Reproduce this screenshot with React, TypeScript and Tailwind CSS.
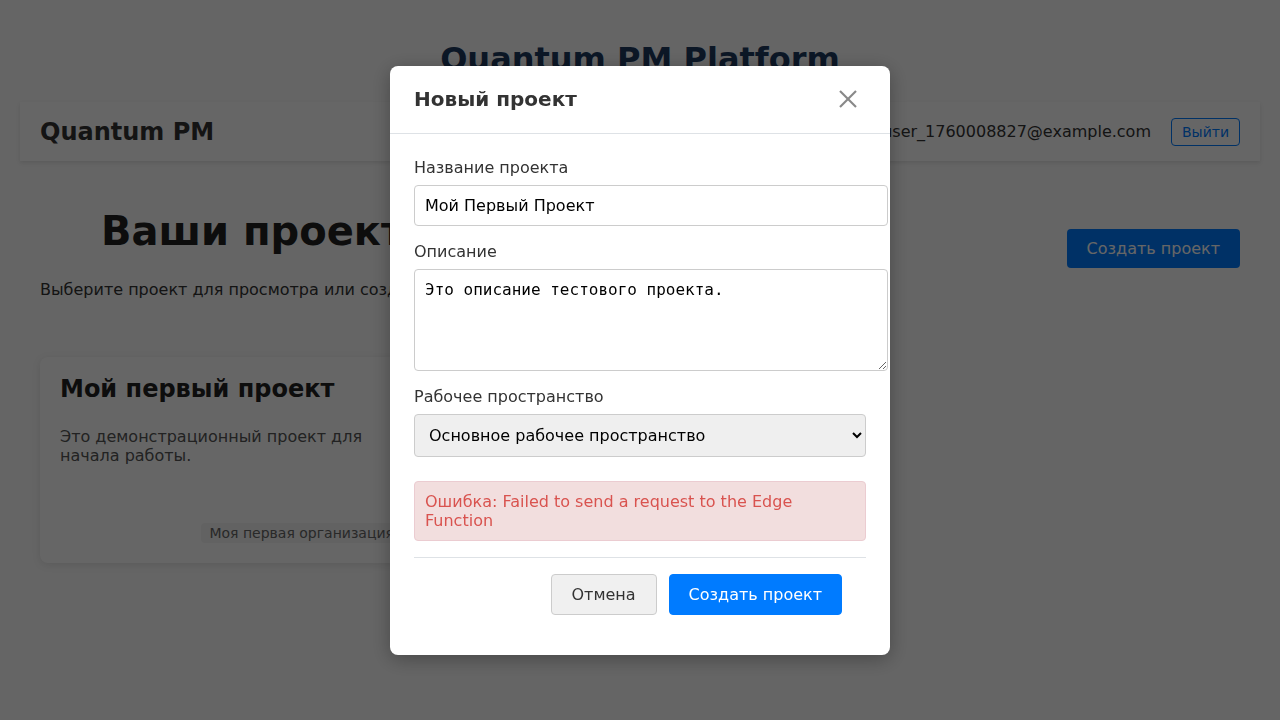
export default function App() {
  return (
    <div className="relative min-h-screen bg-[#fcfcfc] px-5 pt-[41px] font-['DejaVu_Sans',sans-serif] text-[#333]">
      {/* Page title */}
      <h1 className="mb-6 text-center text-[32px] font-bold leading-[37px] text-[#1e3a5f]">
        Quantum PM Platform
      </h1>

      {/* Top bar */}
      <header className="flex h-[59px] items-center justify-between bg-white px-5 shadow-[0_2px_4px_rgba(0,0,0,0.1)]">
        <div className="text-2xl font-bold text-[#333]">Quantum PM</div>
        <div className="flex items-center gap-5">
          <span className="text-base text-[#333]">user_1760008827@example.com</span>
          <button className="rounded border border-[#007bff] px-[10px] py-[3px] text-sm text-[#007bff]">
            Выйти
          </button>
        </div>
      </header>

      {/* Projects */}
      <main className="px-5 pt-[47px]">
        <div className="flex items-start justify-between">
          <div>
            <h2 className="ml-[61px] text-[40px] font-bold leading-[47px] text-[#222]">Ваши проекты</h2>
            <p className="mt-[25px] text-base leading-[19px] text-[#333]">
              Выберите проект для просмотра или создайте новый проект.
            </p>
          </div>
          <button className="mt-[21px] rounded bg-[#007bff] px-5 py-[10px] text-base leading-[19px] text-white">
            Создать проект
          </button>
        </div>

        <div className="mt-[58px] flex gap-5">
          <div className="flex h-[206px] w-[382px] flex-col rounded-lg bg-white p-5 shadow-[0_2px_8px_rgba(0,0,0,0.1)]">
            <h3 className="text-2xl font-bold leading-[24px] text-[#222]">Мой первый проект</h3>
            <p className="mt-[26px] text-base leading-[19px] text-[#555]">
              Это демонстрационный проект для начала работы.
            </p>
            <div className="mt-auto flex justify-end">
              <span className="rounded bg-[#f5f5f5] px-2 py-[1px] text-sm leading-[18px] text-[#666]">
                Моя первая организация
              </span>
            </div>
          </div>
        </div>
      </main>

      {/* Modal */}
      <div className="fixed inset-0 flex items-center justify-center bg-black/60">
        <div className="w-[500px] rounded-lg bg-white shadow-[0_4px_20px_rgba(0,0,0,0.3)]">
          <div className="flex items-center justify-between border-b border-[#dee2e6] px-6 py-5">
            <h2 className="text-xl font-bold leading-[27px] text-[#333]">Новый проект</h2>
            <button className="mr-[9px] text-[#888]">
              <svg width="18" height="18" viewBox="0 0 18 18" fill="none" stroke="currentColor" strokeWidth="2.2">
                <line x1="1" y1="1" x2="17" y2="17" />
                <line x1="17" y1="1" x2="1" y2="17" />
              </svg>
            </button>
          </div>

          <div className="px-6 pb-10 pt-6">
            <div className="mb-4">
              <label className="mb-2 block text-base leading-[19px] text-[#333]">Название проекта</label>
              <input
                type="text"
                defaultValue="Мой Первый Проект"
                className="box-content w-full rounded border border-[#ccc] px-[10px] py-[10px] text-base leading-[19px] text-black outline-none"
              />
            </div>

            <div className="mb-4">
              <label className="mb-2 block text-base leading-[19px] text-[#333]">Описание</label>
              <textarea
                defaultValue="Это описание тестового проекта."
                className="box-content block h-[80px] w-full rounded border border-[#ccc] px-[10px] py-[10px] font-['DejaVu_Sans_Mono',monospace] text-base leading-[19px] text-black outline-none"
              />
            </div>

            <div>
              <label className="mb-2 block text-base leading-[19px] text-[#333]">Рабочее пространство</label>
              <select className="block h-[43px] w-full rounded border border-[#ccc] bg-[#efefef] px-[10px] text-base text-black outline-none">
                <option>Основное рабочее пространство</option>
              </select>
            </div>

            <div className="mt-6 rounded border border-[#ebccd1] bg-[#f2dede] px-[10px] py-[10px] text-base leading-[19px] text-[#d9534f]">
              Ошибка: Failed to send a request to the Edge Function
            </div>

            <div className="mt-4 flex justify-end gap-3 border-t border-[#dee2e6] pr-6 pt-4">
              <button className="rounded border border-[#ccc] bg-[#f0f0f0] px-5 py-[10px] text-base leading-[19px] text-[#333]">
                Отмена
              </button>
              <button className="rounded border border-[#007bff] bg-[#007bff] px-[19px] py-[10px] text-base leading-[19px] text-white">
                Создать проект
              </button>
            </div>
          </div>
        </div>
      </div>
    </div>
  );
}
